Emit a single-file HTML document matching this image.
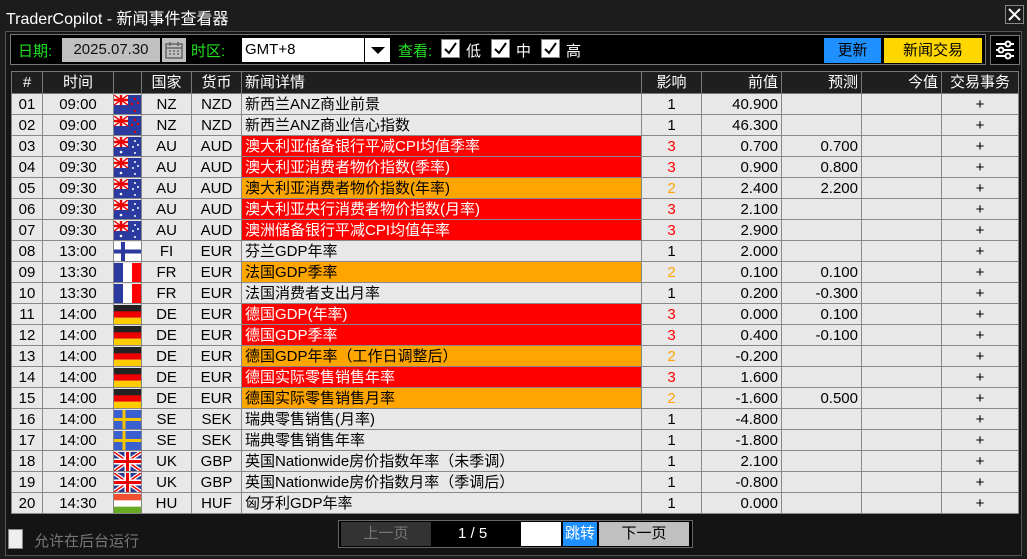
<!DOCTYPE html>
<html><head><meta charset="utf-8"><style>
*{margin:0;padding:0;box-sizing:border-box}
body{width:1027px;height:559px;background:#1c1c1c;font-family:"Liberation Sans","Noto Sans CJK SC",sans-serif;position:relative;overflow:hidden;color:#000}
.abs{position:absolute}
.title{left:6px;top:5px;color:#fff;font-size:16px}
.close{left:1005px;top:5px;width:19px;height:19px;border:1px solid #888;color:#fff}
.panel{left:5px;top:31px;width:1017px;height:525px;border:1px solid #555;background:#141414}
.tool{left:10px;top:34px;width:976px;height:31px;border:1px solid #777;background:#000}
.g{color:#20e020;font-size:15px}
.date{left:62px;top:38px;width:98px;height:24px;background:#c0c0c0;font-size:15px;text-align:center;line-height:24px;color:#111}
.cal{left:162px;top:38px;width:24px;height:24px;background:#c0c0c0}
.sel{left:242px;top:38px;width:148px;height:24px;background:#fff;font-size:15px;line-height:24px;padding-left:3px}
.sel .arr{position:absolute;left:122px;top:0;width:26px;height:24px;border-left:1px solid #000}
.cb{width:19px;height:19px;background:#fff;border:1px solid #888}
.lbl{color:#fff;font-size:15px}
.btn{font-size:15px;text-align:center;line-height:25px}
table{position:absolute;left:11px;top:71px;border-collapse:collapse;font-size:15px;table-layout:fixed}
td,th{border:1px solid #888;padding:0 3px;white-space:nowrap;overflow:hidden}
th{background:#1f1f1f;color:#fff;font-weight:normal;height:22px;line-height:20px;text-align:center;border-color:#777}
td{background:#e8e8e8;text-align:center;height:21px;line-height:19px}
td.n{text-align:left}
td.r{text-align:right}
td.f{padding:0}
td.f svg{display:block;margin:0 auto}
.R{background:#ff0000!important;color:#fff}
.O{background:#ffa500!important}
.i3{color:#ff0000}.i2{color:#ffa500}
</style></head><body>
<svg width="0" height="0" style="position:absolute">
<defs>
<symbol id="uk" viewBox="0 0 27 19" preserveAspectRatio="none"><rect width="27" height="19" fill="#2a3a8f"/><path d="M0 0L27 19M27 0L0 19" stroke="#fff" stroke-width="4"/><path d="M0 0L27 19M27 0L0 19" stroke="#e00" stroke-width="1.5"/><path d="M13.5 0V19M0 9.5H27" stroke="#fff" stroke-width="6"/><path d="M13.5 0V19M0 9.5H27" stroke="#e00" stroke-width="3"/></symbol>
<symbol id="au" viewBox="0 0 27 19" preserveAspectRatio="none"><rect width="27" height="19" fill="#2a3a9f"/><rect width="14" height="10" fill="#fff"/><path d="M0 0L14 10M14 0L0 10" stroke="#e00" stroke-width="1.5"/><path d="M7 0V10M0 5H14" stroke="#e00" stroke-width="2.5"/><circle cx="7" cy="15" r="1.3" fill="#fff"/><circle cx="21" cy="4" r="1" fill="#fff"/><circle cx="24" cy="8" r="1" fill="#fff"/><circle cx="19" cy="10" r="1" fill="#fff"/><circle cx="21" cy="16" r="1" fill="#fff"/></symbol>
<symbol id="nz" viewBox="0 0 27 19" preserveAspectRatio="none"><rect width="27" height="19" fill="#2a3a9f"/><rect width="14" height="10" fill="#fff"/><path d="M0 0L14 10M14 0L0 10" stroke="#e00" stroke-width="1.5"/><path d="M7 0V10M0 5H14" stroke="#e00" stroke-width="2.5"/><circle cx="21" cy="4" r="1.2" fill="#e00"/><circle cx="24" cy="8" r="1.2" fill="#e00"/><circle cx="18" cy="9" r="1.2" fill="#e00"/><circle cx="21" cy="16" r="1.2" fill="#e00"/></symbol>
<symbol id="fi" viewBox="0 0 27 19" preserveAspectRatio="none"><rect width="27" height="19" fill="#fff"/><path d="M9 0V19M0 9.5H27" stroke="#2a3a9f" stroke-width="4"/></symbol>
<symbol id="se" viewBox="0 0 27 19" preserveAspectRatio="none"><rect width="27" height="19" fill="#3a5fcf"/><path d="M10 0V19M0 9.5H27" stroke="#f5c400" stroke-width="3"/></symbol>
<symbol id="fr" viewBox="0 0 27 19" preserveAspectRatio="none"><rect width="9" height="19" fill="#2a3a9f"/><rect x="9" width="9" height="19" fill="#fff"/><rect x="18" width="9" height="19" fill="#f00"/></symbol>
<symbol id="de" viewBox="0 0 27 19" preserveAspectRatio="none"><rect width="27" height="7" fill="#222"/><rect y="6.3" width="27" height="6.4" fill="#e00"/><rect y="12.7" width="27" height="6.3" fill="#fc0"/></symbol>
<symbol id="hu" viewBox="0 0 27 19" preserveAspectRatio="none"><rect width="27" height="7" fill="#f05030"/><rect y="6.3" width="27" height="6.4" fill="#fff"/><rect y="12.7" width="27" height="6.3" fill="#6a2"/></symbol>
</defs></svg>
<div class="abs title">TraderCopilot - 新闻事件查看器</div>
<div class="abs close"><svg width="17" height="17"><path d="M3 3L14 14M14 3L3 14" stroke="#fff" stroke-width="2"/></svg></div>
<div class="abs panel"></div>
<div class="abs tool"></div>
<div class="abs g" style="left:18px;top:40px">日期:</div>
<div class="abs date">2025.07.30</div>
<div class="abs cal"><svg width="24" height="24"><rect x="4" y="6" width="16" height="14" fill="none" stroke="#666" stroke-width="1.5"/><path d="M4 10H20M8 4V8M16 4V8" stroke="#666" stroke-width="1.5"/><path d="M7 13h2M11 13h2M15 13h2M7 16h2M11 16h2M15 16h2" stroke="#666" stroke-width="1.5"/></svg></div>
<div class="abs g" style="left:191px;top:40px">时区:</div>
<div class="abs sel">GMT+8<div class="arr"><svg width="26" height="24"><path d="M6 9H20L13 16Z" fill="#000"/></svg></div></div>
<div class="abs g" style="left:398px;top:40px">查看:</div>
<div class="abs cb" style="left:441px;top:39px"><svg width="17" height="17"><path d="M3 9L7 13L14 3" stroke="#000" stroke-width="2" fill="none"/></svg></div>
<div class="abs lbl" style="left:466px;top:40px">低</div>
<div class="abs cb" style="left:491px;top:39px"><svg width="17" height="17"><path d="M3 9L7 13L14 3" stroke="#000" stroke-width="2" fill="none"/></svg></div>
<div class="abs lbl" style="left:516px;top:40px">中</div>
<div class="abs cb" style="left:541px;top:39px"><svg width="17" height="17"><path d="M3 9L7 13L14 3" stroke="#000" stroke-width="2" fill="none"/></svg></div>
<div class="abs lbl" style="left:566px;top:40px">高</div>
<div class="abs btn" style="left:824px;top:38px;width:57px;height:25px;background:#1e90ff">更新</div>
<div class="abs btn" style="left:884px;top:38px;width:98px;height:25px;background:#ffd700">新闻交易</div>
<div class="abs" style="left:990px;top:35px;width:30px;height:30px;border:1px solid #777;background:#000"><svg width="28" height="28"><g stroke="#fff" stroke-width="2" fill="#000"><path d="M5 8H23M5 14H23M5 20H23"/><circle cx="17" cy="8" r="2.5"/><circle cx="10" cy="14" r="2.5"/><circle cx="17" cy="20" r="2.5"/></g></svg></div>
<table>
<colgroup><col style="width:31px"><col style="width:71px"><col style="width:27px"><col style="width:50px"><col style="width:50px"><col style="width:400px"><col style="width:60px"><col style="width:80px"><col style="width:80px"><col style="width:80px"><col style="width:77px"></colgroup>
<tr><th>#</th><th>时间</th><th></th><th>国家</th><th>货币</th><th style="text-align:left">新闻详情</th><th>影响</th><th style="text-align:right">前值</th><th style="text-align:right">预测</th><th style="text-align:right">今值</th><th>交易事务</th></tr>
<tr><td>01</td><td>09:00</td><td class="f"><svg width="27" height="19"><use href="#nz"/></svg></td><td>NZ</td><td>NZD</td><td class="n">新西兰ANZ商业前景</td><td>1</td><td class="r">40.900</td><td></td><td></td><td>+</td></tr>
<tr><td>02</td><td>09:00</td><td class="f"><svg width="27" height="19"><use href="#nz"/></svg></td><td>NZ</td><td>NZD</td><td class="n">新西兰ANZ商业信心指数</td><td>1</td><td class="r">46.300</td><td></td><td></td><td>+</td></tr>
<tr><td>03</td><td>09:30</td><td class="f"><svg width="27" height="19"><use href="#au"/></svg></td><td>AU</td><td>AUD</td><td class="n R">澳大利亚储备银行平减CPI均值季率</td><td class="i3">3</td><td class="r">0.700</td><td class="r">0.700</td><td></td><td>+</td></tr>
<tr><td>04</td><td>09:30</td><td class="f"><svg width="27" height="19"><use href="#au"/></svg></td><td>AU</td><td>AUD</td><td class="n R">澳大利亚消费者物价指数(季率)</td><td class="i3">3</td><td class="r">0.900</td><td class="r">0.800</td><td></td><td>+</td></tr>
<tr><td>05</td><td>09:30</td><td class="f"><svg width="27" height="19"><use href="#au"/></svg></td><td>AU</td><td>AUD</td><td class="n O">澳大利亚消费者物价指数(年率)</td><td class="i2">2</td><td class="r">2.400</td><td class="r">2.200</td><td></td><td>+</td></tr>
<tr><td>06</td><td>09:30</td><td class="f"><svg width="27" height="19"><use href="#au"/></svg></td><td>AU</td><td>AUD</td><td class="n R">澳大利亚央行消费者物价指数(月率)</td><td class="i3">3</td><td class="r">2.100</td><td></td><td></td><td>+</td></tr>
<tr><td>07</td><td>09:30</td><td class="f"><svg width="27" height="19"><use href="#au"/></svg></td><td>AU</td><td>AUD</td><td class="n R">澳洲储备银行平减CPI均值年率</td><td class="i3">3</td><td class="r">2.900</td><td></td><td></td><td>+</td></tr>
<tr><td>08</td><td>13:00</td><td class="f"><svg width="27" height="19"><use href="#fi"/></svg></td><td>FI</td><td>EUR</td><td class="n">芬兰GDP年率</td><td>1</td><td class="r">2.000</td><td></td><td></td><td>+</td></tr>
<tr><td>09</td><td>13:30</td><td class="f"><svg width="27" height="19"><use href="#fr"/></svg></td><td>FR</td><td>EUR</td><td class="n O">法国GDP季率</td><td class="i2">2</td><td class="r">0.100</td><td class="r">0.100</td><td></td><td>+</td></tr>
<tr><td>10</td><td>13:30</td><td class="f"><svg width="27" height="19"><use href="#fr"/></svg></td><td>FR</td><td>EUR</td><td class="n">法国消费者支出月率</td><td>1</td><td class="r">0.200</td><td class="r">-0.300</td><td></td><td>+</td></tr>
<tr><td>11</td><td>14:00</td><td class="f"><svg width="27" height="19"><use href="#de"/></svg></td><td>DE</td><td>EUR</td><td class="n R">德国GDP(年率)</td><td class="i3">3</td><td class="r">0.000</td><td class="r">0.100</td><td></td><td>+</td></tr>
<tr><td>12</td><td>14:00</td><td class="f"><svg width="27" height="19"><use href="#de"/></svg></td><td>DE</td><td>EUR</td><td class="n R">德国GDP季率</td><td class="i3">3</td><td class="r">0.400</td><td class="r">-0.100</td><td></td><td>+</td></tr>
<tr><td>13</td><td>14:00</td><td class="f"><svg width="27" height="19"><use href="#de"/></svg></td><td>DE</td><td>EUR</td><td class="n O">德国GDP年率（工作日调整后）</td><td class="i2">2</td><td class="r">-0.200</td><td></td><td></td><td>+</td></tr>
<tr><td>14</td><td>14:00</td><td class="f"><svg width="27" height="19"><use href="#de"/></svg></td><td>DE</td><td>EUR</td><td class="n R">德国实际零售销售年率</td><td class="i3">3</td><td class="r">1.600</td><td></td><td></td><td>+</td></tr>
<tr><td>15</td><td>14:00</td><td class="f"><svg width="27" height="19"><use href="#de"/></svg></td><td>DE</td><td>EUR</td><td class="n O">德国实际零售销售月率</td><td class="i2">2</td><td class="r">-1.600</td><td class="r">0.500</td><td></td><td>+</td></tr>
<tr><td>16</td><td>14:00</td><td class="f"><svg width="27" height="19"><use href="#se"/></svg></td><td>SE</td><td>SEK</td><td class="n">瑞典零售销售(月率)</td><td>1</td><td class="r">-4.800</td><td></td><td></td><td>+</td></tr>
<tr><td>17</td><td>14:00</td><td class="f"><svg width="27" height="19"><use href="#se"/></svg></td><td>SE</td><td>SEK</td><td class="n">瑞典零售销售年率</td><td>1</td><td class="r">-1.800</td><td></td><td></td><td>+</td></tr>
<tr><td>18</td><td>14:00</td><td class="f"><svg width="27" height="19"><use href="#uk"/></svg></td><td>UK</td><td>GBP</td><td class="n">英国Nationwide房价指数年率（未季调）</td><td>1</td><td class="r">2.100</td><td></td><td></td><td>+</td></tr>
<tr><td>19</td><td>14:00</td><td class="f"><svg width="27" height="19"><use href="#uk"/></svg></td><td>UK</td><td>GBP</td><td class="n">英国Nationwide房价指数月率（季调后）</td><td>1</td><td class="r">-0.800</td><td></td><td></td><td>+</td></tr>
<tr><td>20</td><td>14:30</td><td class="f"><svg width="27" height="19"><use href="#hu"/></svg></td><td>HU</td><td>HUF</td><td class="n">匈牙利GDP年率</td><td>1</td><td class="r">0.000</td><td></td><td></td><td>+</td></tr>
</table>
<div class="abs" style="left:8px;top:529px;width:15px;height:20px;background:#eee;border:1px solid #888"></div>
<div class="abs" style="left:34px;top:530px;color:#777;font-size:15px">允许在后台运行</div>
<div class="abs" style="left:338px;top:520px;width:355px;height:28px;border:1px solid #666;background:#000"></div>
<div class="abs btn" style="left:341px;top:522px;width:90px;height:24px;background:#333;color:#777;line-height:24px">上一页</div>
<div class="abs" style="left:458px;top:525px;color:#fff;font-size:15px">1 / 5</div>
<div class="abs" style="left:521px;top:522px;width:40px;height:24px;background:#fff"></div>
<div class="abs btn" style="left:563px;top:522px;width:34px;height:24px;background:#1e90ff;color:#fff;line-height:24px">跳转</div>
<div class="abs btn" style="left:599px;top:522px;width:90px;height:24px;background:#c0c0c0;line-height:24px">下一页</div>
</body></html>
